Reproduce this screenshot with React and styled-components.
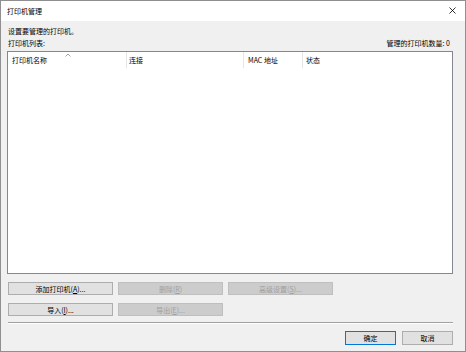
import React from "react";
import styled, { createGlobalStyle } from "styled-components";

const Global = createGlobalStyle`
  html, body { margin: 0; padding: 0; background: #f0f0f0; }
  body { font-family: "Noto Sans CJK SC", "Noto Sans", sans-serif; font-size: 7px; color: #000; }
`;

const Window = styled.div`
  width: 466px;
  height: 352px;
  box-sizing: border-box;
  border: 1px solid #8f8f8f;
  background: #f0f0f0;
  display: flex;
  flex-direction: column;
`;

const TitleBar = styled.div`
  height: 19px;
  background: #fff;
  display: flex;
  align-items: center;
  justify-content: space-between;
  padding: 0 6px 1px 6px;
  flex: none;
`;

const Title = styled.span`
  font-size: 7px;
  line-height: 10px;
  color: #000;
`;

const Close = styled.svg`
  width: 7px;
  height: 7px;
  display: block;
  margin-right: 3px;
`;

const Body = styled.div`
  flex: 1;
  display: flex;
  flex-direction: column;
  padding: 5px 12px 0 6px;
`;

const Line = styled.div`
  display: flex;
  justify-content: space-between;
  line-height: 10px;
  height: 10px;
  margin-top: ${(p) => p.$mt || 0}px;
  padding-left: 1px;
  padding-right: 3px;
`;

const ListBox = styled.div`
  margin-top: 3px;
  height: 223px;
  box-sizing: border-box;
  border: 1px solid #828790;
  background: #fff;
`;

const Header = styled.div`
  display: grid;
  grid-template-columns: 119px 117px 59px 1fr;
  height: 16px;
  position: relative;
`;

const HeadCell = styled.div`
  padding-left: ${(p) => p.$pl}px;
  border-right: ${(p) => (p.$sep ? "1px solid #e5e5e5" : "none")};
  display: flex;
  align-items: center;
  line-height: 10px;
  white-space: nowrap;
`;

const Caret = styled.svg`
  position: absolute;
  left: 57px;
  top: 1px;
  width: 6px;
  height: 4px;
`;

const ButtonGrid = styled.div`
  display: grid;
  grid-template-columns: repeat(3, 105px);
  column-gap: 5px;
  row-gap: 8px;
  margin-top: 8px;
  padding-left: 1px;
`;

const Btn = styled.div`
  height: 13px;
  box-sizing: border-box;
  border: 1px solid ${(p) => (p.$default ? "#0078d7" : p.$disabled ? "#bfbfbf" : "#adadad")};
  background: ${(p) => (p.$disabled ? "#cccccc" : "#e1e1e1")};
  color: ${(p) => (p.$disabled ? "#a0a0a0" : "#000")};
  display: flex;
  align-items: center;
  justify-content: center;
  line-height: 10px;
  white-space: nowrap;
  u { text-decoration: underline; }
`;

const Separator = styled.div`
  margin-top: 6px;
  margin-left: 1px;
  height: 0;
  border-top: 1px solid #a0a0a0;
  border-bottom: 1px solid #ffffff;
`;

const Footer = styled.div`
  display: flex;
  justify-content: flex-end;
  gap: 6px;
  margin-top: 7px;
`;

const DlgBtn = styled(Btn)`
  width: 51px;
  height: 14px;
`;

export default function App() {
  return (
    <>
      <Global />
      <Window>
        <TitleBar>
          <Title>打印机管理</Title>
          <Close viewBox="0 0 7 7">
            <path d="M0.5 0.5 L6.5 6.5 M6.5 0.5 L0.5 6.5" stroke="#000" strokeWidth="0.8" />
          </Close>
        </TitleBar>
        <Body>
          <Line>设置要管理的打印机。</Line>
          <Line $mt={2}>
            <span>打印机列表:</span>
            <span>管理的打印机数量: 0</span>
          </Line>
          <ListBox>
            <Header>
              <HeadCell $pl={4} $sep>打印机名称</HeadCell>
              <HeadCell $pl={2} $sep>连接</HeadCell>
              <HeadCell $pl={4} $sep>MAC 地址</HeadCell>
              <HeadCell $pl={3}>状态</HeadCell>
              <Caret viewBox="0 0 6 4">
                <path d="M0.5 3.5 L3 1 L5.5 3.5" fill="none" stroke="#9a9a9a" strokeWidth="0.9" />
              </Caret>
            </Header>
          </ListBox>
          <ButtonGrid>
            <Btn>添加打印机(<u>A</u>)...</Btn>
            <Btn $disabled>删除(<u>R</u>)</Btn>
            <Btn $disabled>高级设置(<u>S</u>)...</Btn>
            <Btn>导入(<u>I</u>)...</Btn>
            <Btn $disabled>导出(<u>E</u>)...</Btn>
          </ButtonGrid>
          <Separator />
          <Footer>
            <DlgBtn $default>确定</DlgBtn>
            <DlgBtn>取消</DlgBtn>
          </Footer>
        </Body>
      </Window>
    </>
  );
}
